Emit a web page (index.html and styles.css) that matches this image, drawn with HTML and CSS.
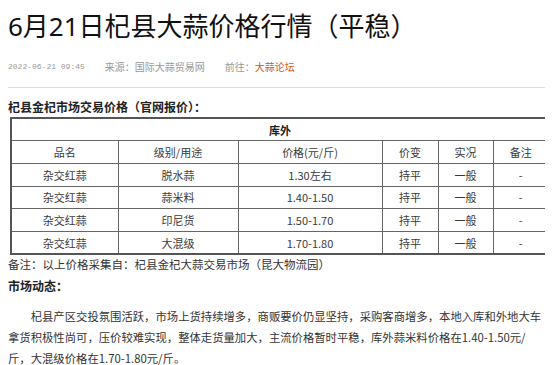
FILE: index.html
```html
<!DOCTYPE html>
<html lang="zh-CN">
<head>
<meta charset="utf-8">
<title>6月21日杞县大蒜价格行情（平稳）</title>
<link rel="stylesheet" href="styles.css">
</head>
<body>
<article class="article">
  <h1 class="title">6月21日杞县大蒜价格行情（平稳）</h1>
  <div class="meta">
    <span class="date">2022-06-21 09:45</span>
    <span class="source">来源：国际大蒜贸易网</span>
    <span class="goto">前往：<a class="forum" href="#">大蒜论坛</a></span>
  </div>
  <div class="content">
    <p class="section">杞县金杞市场交易价格（官网报价）：</p>
    <table class="prices">
      <colgroup>
        <col class="c1"><col class="c2"><col class="c3"><col class="c4"><col class="c5"><col class="c6">
      </colgroup>
      <tr><th colspan="6" class="group">库外</th></tr>
      <tr><td>品名</td><td>级别/用途</td><td>价格(元/斤)</td><td>价变</td><td>实况</td><td>备注</td></tr>
      <tr><td>杂交红蒜</td><td>脱水蒜</td><td>1.30左右</td><td>持平</td><td>一般</td><td>-</td></tr>
      <tr><td>杂交红蒜</td><td>蒜米料</td><td>1.40-1.50</td><td>持平</td><td>一般</td><td>-</td></tr>
      <tr><td>杂交红蒜</td><td>印尼货</td><td>1.50-1.70</td><td>持平</td><td>一般</td><td>-</td></tr>
      <tr><td>杂交红蒜</td><td>大混级</td><td>1.70-1.80</td><td>持平</td><td>一般</td><td>-</td></tr>
    </table>
    <p class="note">备注：以上价格采集自：杞县金杞大蒜交易市场（昆大物流园）</p>
    <p class="section dyn">市场动态：</p>
    <p class="body-text">杞县产区交投氛围活跃，市场上货持续增多，商贩要价仍显坚持，采购客商增多，本地入库和外地大车拿货积极性尚可，压价较难实现，整体走货量加大，主流价格暂时平稳，库外蒜米料价格在1.40-1.50元/斤，大混级价格在1.70-1.80元/斤。</p>
  </div>
</article>
</body>
</html>
```

FILE: styles.css
```css
html, body {
  margin: 0;
  padding: 0;
  background: #ffffff;
}
body {
  margin: 8px;
  font-family: "Noto Sans CJK SC", "Noto Sans", sans-serif;
  color: #333333;
  overflow: hidden;
}
.title {
  margin: 0;
  font-family: "Noto Sans", "Noto Sans CJK SC", sans-serif;
  font-size: 26px;
  line-height: 36px;
  font-weight: 400;
  color: #111111;
  white-space: nowrap;
}
.meta {
  margin-top: 13px;
  height: 20px;
  line-height: 20px;
  font-size: 10px;
  color: #999999;
  display: flex;
  gap: 20px;
  padding-bottom: 10px;
  border-bottom: 1px solid #dddddd;
  width: 539px;
  white-space: nowrap;
}
.date {
  font-family: "Liberation Mono", monospace;
  font-size: 8px;
}
.forum {
  color: #cc5a1e;
  text-decoration: none;
}
.content {
  padding-top: 9px;
}
.section {
  margin: 0;
  font-size: 12px;
  line-height: 20px;
  font-weight: 700;
  color: #222222;
}
.prices {
  margin-left: 2px;
  width: 538px;
  border-collapse: collapse;
  border: 2px solid #555555;
  table-layout: fixed;
  font-size: 11px;
  color: #3a3a3a;
}
.c1 { width: 107px; }
.c2 { width: 120px; }
.c3 { width: 144px; }
.c4 { width: 56px; }
.c5 { width: 55px; }
.c6 { width: 56px; }
.prices tr {
  height: 22.7px;
}
.prices td, .prices th {
  border: 1px solid #666666;
  text-align: center;
  padding: 0;
  line-height: 14px;
  vertical-align: middle;
}
.prices th.group {
  font-weight: 700;
  color: #222222;
}
.note {
  margin: 0;
  font-size: 11.5px;
  line-height: 18px;
  color: #333333;
  white-space: nowrap;
}
.dyn {
  margin-top: 4px;
  line-height: 18px;
}
.body-text {
  margin: 11px 0 0;
  font-size: 11.35px;
  line-height: 21px;
  text-indent: 2em;
  color: #333333;
  width: 537px;
}
```
